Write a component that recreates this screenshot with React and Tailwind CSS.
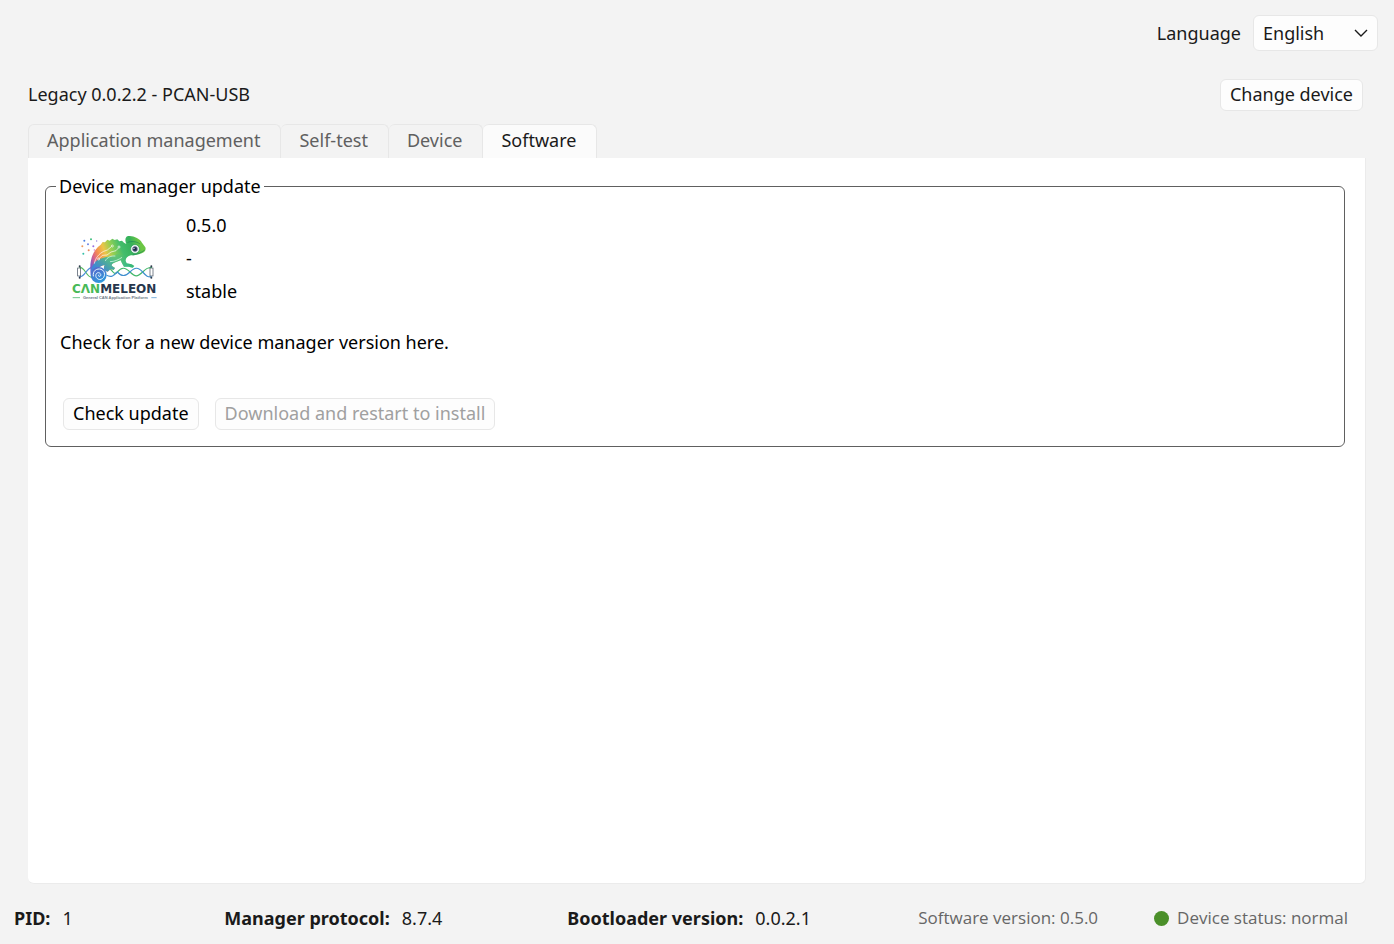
import React, { useState } from 'react';

const TABS = ['Application management', 'Self-test', 'Device', 'Software'];

const Logo = () => (
  <svg viewBox="0 0 300 240" className="w-[100px] h-20 shrink-0" role="img" aria-label="Canmeleon">
    <defs>
      <linearGradient id="skin" gradientUnits="userSpaceOnUse" x1="80" y1="115" x2="230" y2="60">
        <stop offset="0" stopColor="#7a5bc9" />
        <stop offset="0.1" stopColor="#d9608a" />
        <stop offset="0.2" stopColor="#f58f4f" />
        <stop offset="0.33" stopColor="#ecc548" />
        <stop offset="0.48" stopColor="#8fcf52" />
        <stop offset="0.65" stopColor="#43bd6c" />
        <stop offset="0.85" stopColor="#35b15a" />
        <stop offset="1" stopColor="#6cc644" />
      </linearGradient>
      <linearGradient id="belly" gradientUnits="userSpaceOnUse" x1="160" y1="72" x2="115" y2="140">
        <stop offset="0" stopColor="#2bb8a0" stopOpacity="0" />
        <stop offset="0.45" stopColor="#2fb89a" stopOpacity="0.8" />
        <stop offset="1" stopColor="#3f86d8" />
      </linearGradient>
      <linearGradient id="tail" x1="0" y1="0" x2="0.5" y2="1">
        <stop offset="0" stopColor="#5d62c8" />
        <stop offset="1" stopColor="#2f97dc" />
      </linearGradient>
    </defs>

    {/* Pixels floating off the back */}
    <g>
      <circle cx="61" cy="44" r="3" fill="#4c7fe0" />
      <circle cx="81" cy="40" r="3" fill="#3fbf7f" />
      <circle cx="98" cy="45" r="2" fill="#8c7ad8" />
      <circle cx="72" cy="55" r="3" fill="#6f86e6" />
      <circle cx="55" cy="61" r="3" fill="#f09a5c" />
      <circle cx="88" cy="61" r="3" fill="#9b6fe0" />
      <circle cx="74" cy="73" r="3" fill="#e8875a" />
      <circle cx="58" cy="83" r="3" fill="#35c0a8" />
      <circle cx="91" cy="72" r="2" fill="#d86cc0" />
    </g>

    {/* Bus wires */}
    <g fill="none" strokeWidth="3.5">
      <path d="M46 124C64 122 66 154 84 154" stroke="#58bd62" />
      <path d="M46 152C64 154 66 124 86 124" stroke="#4f8fd8" />
      <path d="M130 125C145 125 148 152 160 138S182 122 198 138S220 153 236 138S252 126 264 124" stroke="#43b86a" />
      <path d="M128 148C142 156 150 148 160 138C172 152 184 152 198 138S222 122 236 138S252 152 264 153" stroke="#3f8fcf" />
    </g>
    <g fill="#fff" stroke="#3c4858" strokeWidth="2">
      <rect x="41" y="126" width="9" height="24" />
      <rect x="258" y="126" width="9" height="24" />
    </g>
    <g fill="#2f3b4d">
      <circle cx="47" cy="121" r="3" />
      <circle cx="47" cy="155" r="3" />
      <circle cx="262" cy="121" r="3" />
      <circle cx="262" cy="155" r="3" />
    </g>

    {/* Body */}
    <path
      d="M81 148C74 110 84 74 110 56L116 48L123 49L130 41L137 44L145 38L152 42L160 40L166 46L174 44L180 50L187 54C182 44 184 34 190 31C205 27 227 37 234 50L244 64C247 72 242 79 233 82C222 87 210 87 201 88C190 91 184 97 185 105L188 112L203 115L211 120L206 125L194 122L180 122L174 112L170 103L154 109C146 112 141 116 144 120L153 126L149 132L140 129L131 137C120 134 117 127 122 117C106 120 95 132 91 147Z"
      fill="url(#skin)"
    />
    <path
      d="M81 148C78 130 86 113 98 104C116 92 136 94 160 84L187 90L184 99L185 105L188 112L203 115L211 120L206 125L194 122L180 122L174 112L170 103L154 109C146 112 141 116 144 120L153 126L149 132L140 129L131 137C120 134 117 127 122 117C106 120 95 132 91 147Z"
      fill="url(#belly)"
    />
    <path d="M124 105C129 93 142 89 154 90M138 107C151 107 164 101 174 94" fill="none" stroke="#e8fff4" strokeWidth="2" />

    {/* Circuit traces */}
    <g fill="none" stroke="#fff" strokeWidth="2">
      <path d="M91 113C94 96 105 83 119 76L130 72L142 62" />
      <path d="M106 97L115 88L129 87L141 78L156 74L163 66" />
      <circle cx="145" cy="60" r="3" />
      <circle cx="104" cy="99" r="3" />
      <circle cx="165" cy="63" r="3" />
    </g>

    {/* Eye and mouth */}
    <path d="M190 50C201 44 218 46 228 54M206 87C220 85 232 80 242 72" fill="none" stroke="#1f8a56" strokeWidth="2" />
    <circle cx="213" cy="69" r="13" fill="#fff" stroke="#2f9a5e" strokeWidth="2" />
    <circle cx="213" cy="69" r="8" fill="#4c5a7c" />
    <circle cx="213" cy="69" r="5" fill="#1f2b45" />
    <circle cx="210" cy="67" r="2" fill="#fff" />

    {/* Curled tail */}
    <circle cx="104" cy="147" r="24" fill="url(#tail)" />
    <path
      d="M88 150C85 134 99 126 111 130C125 135 125 155 111 160C99 163 91 150 98 142C105 136 114 145 109 150C106 153 102 150 104 147"
      fill="none"
      stroke="#e9f8ff"
      strokeWidth="3"
      strokeLinecap="round"
    />

    <text x="24" y="202" fontSize="36" fontWeight="700" fontFamily="DejaVu Sans" fill="#27364c">
      <tspan fill="#48b957">CΛN</tspan>MELEON
    </text>
    <text x="154" y="219" textAnchor="middle" fontSize="12" fontWeight="700" fontFamily="Liberation Sans" fill="#6d7885">
      General CAN Application Platform
    </text>
    <path d="M26 215H48" stroke="#6fc58a" strokeWidth="3" />
    <path d="M262 215H278" stroke="#7fb4dd" strokeWidth="3" />
  </svg>
);

const PushButton = ({ children, disabled }) => (
  <button
    type="button"
    disabled={disabled}
    className="h-8 px-[9px] pb-[2px] rounded-md border border-[#e7e7e7] bg-[#fdfdfd] leading-6 whitespace-nowrap disabled:text-[#a0a0a0]"
  >
    {children}
  </button>
);

const Fact = ({ label, value }) => (
  <div className="flex gap-3">
    <dt className="font-bold">{label}</dt>
    <dd>{value}</dd>
  </div>
);

export default function App() {
  const [tab, setTab] = useState('Software');
  const [language, setLanguage] = useState('English');

  return (
    <div className="min-h-screen flex flex-col bg-[#f3f3f3] text-[#1a1a1a] font-['Noto_Sans',sans-serif] text-[18px] leading-6">
      <header className="flex items-center justify-end gap-3 px-4 pt-[15px]">
        <label htmlFor="language">Language</label>
        <div className="relative">
          <select
            id="language"
            value={language}
            onChange={(e) => setLanguage(e.target.value)}
            className="block appearance-none w-[125px] h-9 pl-[9px] pr-8 rounded-md border border-[#e7e7e7] bg-[#fdfdfd]"
          >
            <option>English</option>
          </select>
          <svg viewBox="0 0 14 8" className="absolute right-[10px] top-[14px] w-[14px] h-2 pointer-events-none" aria-hidden="true">
            <path d="M1 1L7 7L13 1" fill="none" stroke="#1a1a1a" strokeWidth="1.4" />
          </svg>
        </div>
      </header>

      <main className="flex-1 flex flex-col px-7 pt-7">
        <div className="flex items-center justify-between pr-[3px]">
          <h1 className="pb-[2px]">Legacy 0.0.2.2 - PCAN-USB</h1>
          <PushButton>Change device</PushButton>
        </div>

        <div role="tablist" className="flex mt-[13px]">
          {TABS.map((name) => (
            <button
              key={name}
              type="button"
              role="tab"
              aria-selected={tab === name}
              onClick={() => setTab(name)}
              className="h-[34px] pl-[18px] pr-5 pb-[3px] rounded-t-md border border-b-0 not-first:border-l-0 border-[#e7e7e7] text-[#606060] aria-selected:bg-[#fbfbfb] aria-selected:text-[#1a1a1a]"
            >
              {name}
            </button>
          ))}
        </div>

        <section className="flex-1 bg-white rounded-b-md border-b border-r border-[#ebebeb] pl-[17px] pr-5 pt-4">
          <fieldset className="rounded-md border border-[#606060] px-[14px] pb-4 text-black">
            <legend className="-ml-1 px-[3px]">Device manager update</legend>

            <div className="flex items-center gap-[22px] pl-1 pt-[11px]">
              <Logo />
              <ul className="leading-[33px] pb-[14px]">
                <li>0.5.0</li>
                <li>-</li>
                <li>stable</li>
              </ul>
            </div>

            <p className="mt-2">Check for a new device manager version here.</p>

            <div className="flex gap-4 mt-11 pl-[3px]">
              <PushButton>Check update</PushButton>
              <PushButton disabled>Download and restart to install</PushButton>
            </div>
          </fieldset>
        </section>
      </main>

      <footer className="flex items-center h-[60px] pl-[14px] pr-[46px] pb-1 pt-3">
        <dl className="flex-1 grid grid-cols-[211fr_344fr_352fr] whitespace-nowrap">
          <Fact label="PID:" value="1" />
          <Fact label="Manager protocol:" value="8.7.4" />
          <Fact label="Bootloader version:" value="0.0.2.1" />
        </dl>
        <div className="flex gap-14 font-['Open_Sans','Noto_Sans',sans-serif] text-[17px] text-[#666666]">
          <span>Software version: 0.5.0</span>
          <span className="flex items-center gap-2">
            <span className="size-[15px] rounded-full bg-[#4a8f29]" />
            Device status: normal
          </span>
        </div>
      </footer>
    </div>
  );
}
